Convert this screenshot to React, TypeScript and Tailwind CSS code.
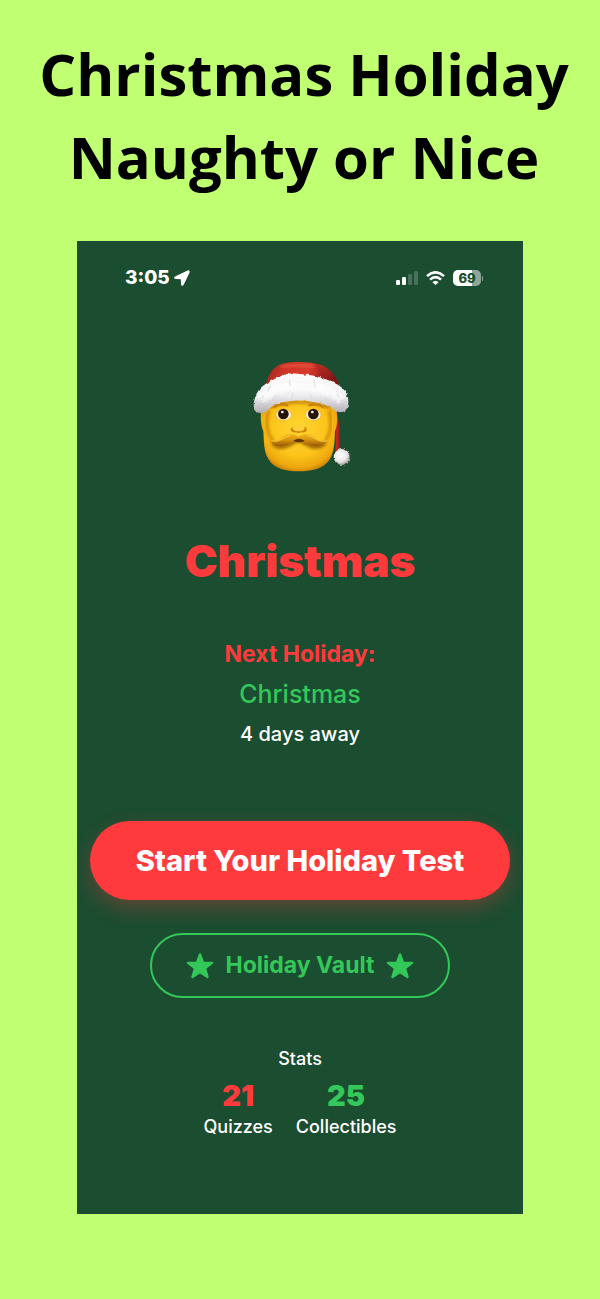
import React from "react";

function SantaFace() {
  return (
    <svg
      viewBox="0 0 360 390"
      className="h-[130px] w-[120px]"
      role="img"
      aria-label="Santa Claus"
    >
      <defs>
        <radialGradient id="skin" cx="0.5" cy="0.42" r="0.62">
          <stop offset="0" stopColor="#ffd530" />
          <stop offset="0.6" stopColor="#fcc41a" />
          <stop offset="0.86" stopColor="#eda60c" />
          <stop offset="1" stopColor="#bd7206" />
        </radialGradient>
        <linearGradient id="cap" x1="0" y1="0" x2="1" y2="0.2">
          <stop offset="0" stopColor="#8e211b" />
          <stop offset="0.3" stopColor="#cf3527" />
          <stop offset="0.6" stopColor="#d83a2b" />
          <stop offset="1" stopColor="#7c1714" />
        </linearGradient>
        <linearGradient id="fur" x1="0" y1="0" x2="0" y2="1">
          <stop offset="0" stopColor="#ffffff" />
          <stop offset="0.55" stopColor="#efeef1" />
          <stop offset="1" stopColor="#b3afb5" />
        </linearGradient>
        <linearGradient id="tail" x1="0" y1="0" x2="1" y2="0">
          <stop offset="0" stopColor="#6f1210" />
          <stop offset="0.6" stopColor="#c32c22" />
          <stop offset="1" stopColor="#81201a" />
        </linearGradient>
        <linearGradient id="moustache" x1="0" y1="0" x2="0" y2="1">
          <stop offset="0" stopColor="#f2b51c" />
          <stop offset="0.5" stopColor="#d6930e" />
          <stop offset="1" stopColor="#965705" />
        </linearGradient>
        <radialGradient id="pom" cx="0.42" cy="0.38" r="0.62">
          <stop offset="0" stopColor="#ffffff" />
          <stop offset="0.65" stopColor="#eae7e7" />
          <stop offset="1" stopColor="#aaa5a3" />
        </radialGradient>
        <filter id="soft" x="-20%" y="-20%" width="140%" height="140%">
          <feGaussianBlur stdDeviation="4" />
        </filter>
        <filter id="fuzz" x="-10%" y="-10%" width="120%" height="120%">
          <feTurbulence type="fractalNoise" baseFrequency="0.09" numOctaves="2" seed="4" result="noise" />
          <feDisplacementMap in="SourceGraphic" in2="noise" scale="9" xChannelSelector="R" yChannelSelector="G" />
        </filter>
      </defs>

      <path d="M284 170 C300 212 303 254 300 306 L285 308 C290 260 288 220 274 180Z" fill="url(#tail)" />

      <path
        d="M64 178 C60 202 63 226 70 244 C72 274 71 304 85 327 C102 357 140 364 176 364 C214 364 252 357 270 327 C283 304 284 274 285 244 C293 224 294 197 287 174 C250 126 103 126 64 178Z"
        fill="url(#skin)"
      />
      <path d="M86 182 C78 214 79 250 100 272" fill="none" stroke="#b97607" strokeWidth="8" opacity="0.75" filter="url(#soft)" />
      <path d="M268 182 C276 214 274 250 256 270" fill="none" stroke="#b97607" strokeWidth="8" opacity="0.75" filter="url(#soft)" />
      <path d="M88 172 Q176 138 268 172" fill="none" stroke="#a8690b" strokeWidth="12" opacity="0.6" filter="url(#soft)" />

      <path d="M104 170 Q119 158 142 166" fill="none" stroke="#c98209" strokeWidth="7" strokeLinecap="round" />
      <path d="M208 166 Q232 158 248 170" fill="none" stroke="#c98209" strokeWidth="7" strokeLinecap="round" />

      <ellipse cx="130" cy="194" rx="25" ry="18" fill="#e8b83f" />
      <ellipse cx="131" cy="194" rx="22" ry="16" fill="#fff3d2" />
      <circle cx="130" cy="192" r="16" fill="#291408" />
      <circle cx="127" cy="186" r="4" fill="#fff" />
      <ellipse cx="221" cy="194" rx="25" ry="18" fill="#e8b83f" />
      <ellipse cx="220" cy="194" rx="22" ry="16" fill="#fff3d2" />
      <circle cx="220" cy="192" r="16" fill="#291408" />
      <circle cx="217" cy="186" r="4" fill="#fff" />

      <path d="M152 240 Q154 229 166 232 Q176 224 187 232 Q200 228 201 240 Q195 250 184 247 Q176 252 168 247 Q157 250 152 240Z" fill="#cf8407" />
      <ellipse cx="176" cy="235" rx="18" ry="9" fill="#ffce38" />

      <path
        d="M176 268 C158 256 142 258 130 268 C117 278 104 280 92 272 C94 292 112 301 137 295 C155 289 166 278 176 278 C186 278 199 291 217 296 C240 300 258 292 262 272 C247 279 234 278 221 268 C209 258 192 256 176 268Z"
        fill="#8a4f05"
        opacity="0.75"
        filter="url(#soft)"
      />
      <path
        d="M176 262 C160 248 142 250 130 261 C117 274 104 276 92 268 C95 285 114 292 137 286 C155 281 166 270 176 270 C186 270 199 282 217 287 C238 291 256 285 262 268 C247 275 234 273 221 261 C209 250 191 248 176 262Z"
        fill="url(#moustache)"
      />
      <path d="M95 271 C116 282 133 258 150 256 M260 271 C239 282 220 258 203 256" fill="none" stroke="#ffcf3a" strokeWidth="4" strokeLinecap="round" opacity="0.7" />
      <path d="M160 272 Q176 260 194 272 Q177 281 160 272Z" fill="#5f3104" />

      <path d="M76 118 C80 80 96 48 132 40 C170 33 216 35 246 46 C276 58 296 88 302 124Z" fill="url(#cap)" />
      <path d="M122 52 Q172 38 226 52" fill="none" stroke="#f0624a" strokeWidth="9" opacity="0.6" filter="url(#soft)" />
      <path d="M222 40 Q246 56 252 86" fill="none" stroke="#8f1c16" strokeWidth="6" opacity="0.6" filter="url(#soft)" />

      <g filter="url(#fuzz)">
        <path
          d="M64 112 C80 98 100 88 124 78 C144 68 160 68 178 72 C206 74 232 78 256 87 C280 96 302 106 316 124 C328 144 328 166 318 180 C308 190 292 188 280 178 C262 164 240 158 216 155 C186 149 160 151 130 156 C108 158 92 172 78 184 C66 192 50 190 43 180 C38 164 42 134 64 112Z"
          fill="url(#fur)"
        />
        <path d="M60 150 C96 116 130 106 180 108 C236 110 276 120 306 150" fill="none" stroke="#fff" strokeWidth="28" opacity="0.7" filter="url(#soft)" />
        <path
          d="M90 108 L84 124 M150 90 L148 106 M220 94 L226 110 M288 122 L296 140 M70 138 L62 156 M108 136 L98 150 M160 132 L152 144 M210 134 L216 146 M256 142 L266 156"
          fill="none"
          stroke="#d2d0d5"
          strokeWidth="4"
          opacity="0.5"
          strokeLinecap="round"
        />
      </g>

      <g filter="url(#fuzz)">
        <circle cx="305" cy="321" r="24" fill="url(#pom)" />
      </g>
    </svg>
  );
}

function StatusBar() {
  return (
    <div className="flex h-[74px] w-full items-center justify-between pr-10 pl-12 text-white">
      <div className="flex items-center gap-1">
        <span className="text-[19px] leading-6 font-extrabold">3:05</span>
        <svg viewBox="0 0 16 16" className="size-4" aria-label="Location" fill="currentColor">
          <path
            d="M14 1.2 1.4 7.2C.8 7.5.9 8.1 1.6 8.1l5.5.2c.4 0 .6.2.6.6l.2 5.3c0 .7.7.8 1 .2L14.8 2C15 1.4 14.6.9 14 1.2Z"
            stroke="currentColor"
            strokeWidth="1.8"
            strokeLinejoin="round"
          />
        </svg>
      </div>
      <div className="flex items-center gap-2">
        <svg viewBox="0 0 22 15" className="h-[15px] w-[22px]" aria-label="Signal" fill="currentColor">
          <rect x="0" y="9" width="4" height="5" rx="1.2" />
          <rect x="6" y="6" width="4" height="8" rx="1.2" />
          <rect x="12" y="3" width="4" height="11" rx="1.2" opacity="0.2" />
          <rect x="18" y="0" width="4" height="14" rx="1.2" opacity="0.2" />
        </svg>
        <svg viewBox="0 0 19 14" className="h-[14px] w-[19px]" aria-label="Wi-Fi" fill="none" stroke="currentColor" strokeWidth="2.6">
          <path d="M1 5.1 Q9.5 -2.5 18 5.1" />
          <path d="M4 8.6 Q9.5 3.5 15 8.6" />
          <path d="M6.4 11.2 Q9.5 8.2 12.6 11.2 L9.5 14Z" fill="currentColor" stroke="none" />
        </svg>
        <div className="flex items-center gap-px">
          <div className="flex h-4 w-7 items-center justify-center rounded-[5px] bg-linear-to-r from-white from-69% to-[#8ea698] to-69% text-[13px] leading-4 font-extrabold text-[#1b4d31]">
            69
          </div>
          <div className="h-[5px] w-px rounded-r-sm bg-[#8ea698]" />
        </div>
      </div>
    </div>
  );
}

function Star() {
  return (
    <svg viewBox="0 0 28 28" className="size-7" fill="currentColor" aria-hidden="true">
      <path
        d="M14 2.5 L17 10.6 L26 10.9 L19 16.4 L21.5 25 L14 20 L6.5 25 L9 16.4 L2 10.9 L11 10.6Z"
        stroke="currentColor"
        strokeWidth="2.4"
        strokeLinejoin="round"
      />
    </svg>
  );
}

function Stat({ value, label, tone }: { value: number; label: string; tone: string }) {
  return (
    <div className="flex flex-col items-center gap-[3px]">
      <span className={`text-[29px] leading-8 font-black ${tone}`}>{value}</span>
      <span className="text-[18px] leading-6 font-medium">{label}</span>
    </div>
  );
}

export default function App() {
  return (
    <div className="min-h-screen bg-[#c1ff72] pt-8 pb-[85px] font-['Inter',sans-serif]">
      <h1 className="pl-2 text-center font-['Open_Sans',sans-serif] text-[58px] leading-[83px] font-bold text-black">
        Christmas Holiday
        <br />
        Naughty or Nice
      </h1>
      <main className="mx-[77px] mt-[43px] flex flex-col items-center bg-[#1b4d31] pb-[75px] text-white">
        <StatusBar />
        <div className="mt-[35px]">
          <SantaFace />
        </div>
        <h2 className="mt-[55px] text-[44px] leading-[52px] font-black text-[#ff3a3d]">Christmas</h2>
        <section className="mt-[53px] flex flex-col items-center gap-2 text-center">
          <h3 className="text-[23px] leading-7 font-bold text-[#ff3a3d]">Next Holiday:</h3>
          <p className="text-[25px] leading-9 font-medium text-[#34c759]">Christmas</p>
          <p className="text-[20px] leading-7 font-medium">4 days away</p>
        </section>
        <div className="mt-[73px] flex w-full flex-col items-center gap-[33px] px-[13px]">
          <button
            type="button"
            className="h-[79px] w-full rounded-full bg-[#ff3a3d] text-[29px] font-extrabold shadow-[0_8px_20px_rgba(255,58,61,0.3)]"
          >
            Start Your Holiday Test
          </button>
          <button
            type="button"
            className="flex h-[65px] items-center gap-3 rounded-full border-2 border-[#34c759] px-[34px] text-[23px] font-bold text-[#34c759]"
          >
            <Star />
            Holiday Vault
            <Star />
          </button>
        </div>
        <section className="mt-[49px] flex flex-col items-center gap-[9px]">
          <h3 className="text-[18px] leading-6 font-medium">Stats</h3>
          <div className="flex gap-[23px]">
            <Stat value={21} label="Quizzes" tone="text-[#ff3a3d]" />
            <Stat value={25} label="Collectibles" tone="text-[#34c759]" />
          </div>
        </section>
      </main>
    </div>
  );
}
